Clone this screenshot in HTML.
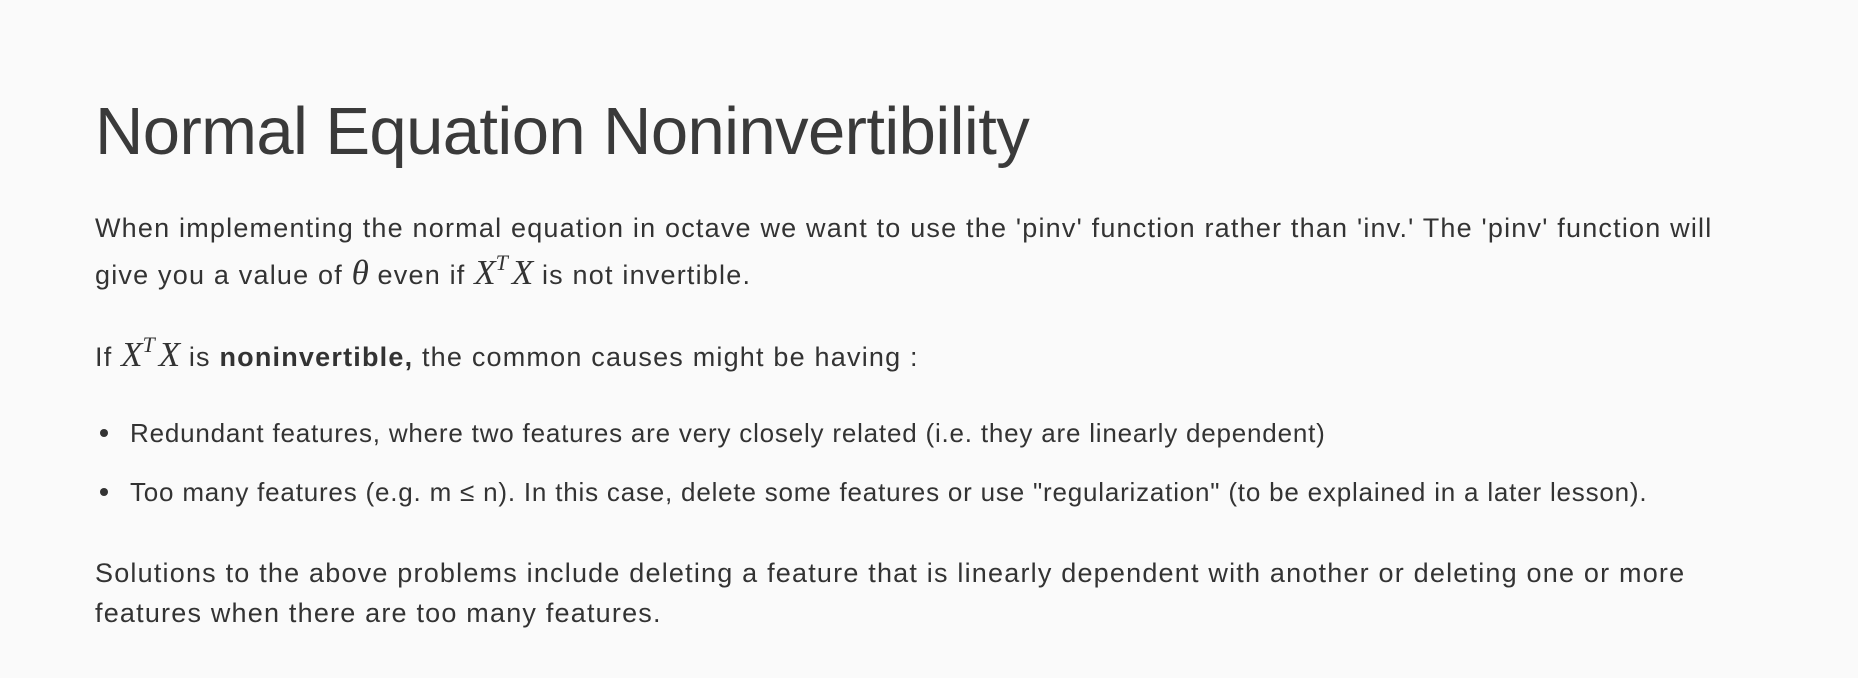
<!DOCTYPE html>
<html><head><meta charset="utf-8"><style>
html,body{margin:0;padding:0;background:#fafafa;}
body{width:1858px;height:678px;position:relative;overflow:hidden;color:#333;font-family:"Liberation Sans",sans-serif;}
.l{position:absolute;left:95px;white-space:nowrap;line-height:1;}
.t{font-size:67px;letter-spacing:-0.6px;top:98px;color:#3a3a3a;font-weight:300;}
.p{font-size:27px;letter-spacing:1.2px;}
.b{font-size:26px;left:130px;letter-spacing:0.8px;}
.d{position:absolute;left:100px;width:8px;height:8px;border-radius:50%;background:#333;}
.m{font-family:"Liberation Serif",serif;font-style:italic;font-size:35px;letter-spacing:0;}
sup{font-size:22px;vertical-align:0;position:relative;top:-14px;margin-right:4px;}
</style></head><body>
<div class="l t">Normal Equation Noninvertibility</div>
<div class="l p" style="top:215px">When implementing the normal equation in octave we want to use the 'pinv' function rather than 'inv.' The 'pinv' function will</div>
<div class="l p" style="top:255px">give you a value of <span class="m">θ</span> even if <span class="m">X<sup>T</sup>X</span> is not invertible.</div>
<div class="l p" style="top:337px">If <span class="m">X<sup>T</sup>X</span> is <b>noninvertible,</b> the common causes might be having :</div>
<div class="d" style="top:429px"></div>
<div class="l b" style="top:420px">Redundant features, where two features are very closely related (i.e. they are linearly dependent)</div>
<div class="d" style="top:488px"></div>
<div class="l b" style="top:479px">Too many features (e.g. m ≤ n). In this case, delete some features or use "regularization" (to be explained in a later lesson).</div>
<div class="l p" style="top:560px">Solutions to the above problems include deleting a feature that is linearly dependent with another or deleting one or more</div>
<div class="l p" style="top:600px">features when there are too many features.</div>
</body></html>
